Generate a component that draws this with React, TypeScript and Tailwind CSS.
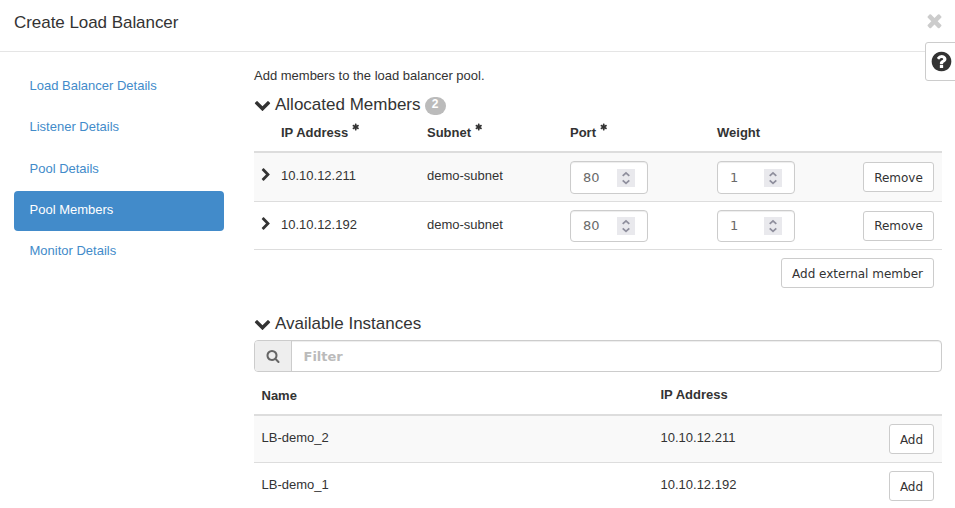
import React from "react";

const CHEVRON_DOWN =
  "M1683 808l-742 741q-19 19-45 19t-45-19l-742-741q-19-19-19-45.5t19-45.5l166-165q19-19 45-19t45 19l531 531 531-531q19-19 45-19t45 19l166 165q19 19 19 45.5t-19 45.5z";
const CHEVRON_RIGHT =
  "M1363 877l-742 742q-19 19-45 19t-45-19l-166-166q-19-19-19-45t19-45l531-531-531-531q-19-19-19-45t19-45l166-166q19-19 45-19t45 19l742 742q19 19 19 45t-19 45z";
const TIMES =
  "M1490 1322q0 40-28 68l-136 136q-28 28-68 28t-68-28l-294-294-294 294q-28 28-68 28t-68-28l-136-136q-28-28-28-68t28-68l294-294-294-294q-28-28-28-68t28-68l136-136q28-28 68-28t68 28l294 294 294-294q28-28 68-28t68 28l136 136q28 28 28 68t-28 68l-294 294 294 294q28 28 28 68z";
const QUESTION =
  "M1024 1376v-192q0-14-9-23t-23-9h-192q-14 0-23 9t-9 23v192q0 14 9 23t23 9h192q14 0 23-9t9-23zm256-672q0-88-55.5-163t-138.5-116-170-41q-243 0-371 213-15 24 8 42l132 100q7 6 19 6 16 0 25-12 53-68 86-92 34-24 86-24 48 0 85.5 26t37.5 59q0 38-20 61t-68 45q-63 28-115.5 86.5t-52.5 125.5v36q0 14 9 23t23 9h192q14 0 23-9t9-23q0-19 21.5-49.5t54.5-49.5q32-18 49-28.5t46-35 44.5-48 28-60.5 12.5-81zm384 192q0 209-103 385.5t-279.5 279.5-385.5 103-385.5-103-279.5-279.5-103-385.5 103-385.5 279.5-279.5 385.5-103 385.5 103 279.5 279.5 103 385.5z";
const SEARCH =
  "M1216 832q0-185-131.5-316.5t-316.5-131.5-316.5 131.5-131.5 316.5 131.5 316.5 316.5 131.5 316.5-131.5 131.5-316.5zm512 832q0 52-38 90t-90 38q-54 0-90-38l-343-342q-179 124-399 124-143 0-273.5-55.5t-225-150-150-225-55.5-273.5 55.5-273.5 150-225 225-150 273.5-55.5 273.5 55.5 225 150 150 225 55.5 273.5q0 220-124 399l343 343q37 37 37 90z";
const ASTERISK =
  "M1482 1050q46 26 59.5 77.5t-12.5 97.5l-64 110q-26 46-77.5 59.5t-97.5-12.5l-266-153v307q0 52-38 90t-90 38h-128q-52 0-90-38t-38-90v-307l-266 153q-46 26-97.5 12.5t-77.5-59.5l-64-110q-26-46-12.5-97.5t59.5-77.5l266-154-266-154q-46-26-59.5-77.5t12.5-97.5l64-110q26-46 77.5-59.5t97.5 12.5l266 153v-307q0-52 38-90t90-38h128q52 0 90 38t38 90v307l266-153q46-26 97.5-12.5t77.5 59.5l64 110q26 46 12.5 97.5t-59.5 77.5l-266 154z";

function Icon({ d, className }: { d: string; className: string }) {
  return (
    <svg viewBox="0 0 1792 1792" fill="currentColor" aria-hidden="true" className={`shrink-0 ${className}`}>
      <path d={d} />
    </svg>
  );
}

const steps = ["Load Balancer Details", "Listener Details", "Pool Details", "Pool Members", "Monitor Details"];

function Button({ children, className = "leading-[30px]" }: { children: React.ReactNode; className?: string }) {
  return (
    <button
      className={`h-[30px] shrink-0 rounded-[3px] border border-[#ccc] bg-white text-center font-['DejaVu_Sans',sans-serif] text-[12px] whitespace-nowrap text-[#333] ${className}`}
    >
      {children}
    </button>
  );
}

function NumberInput({ value, className }: { value: string; className: string }) {
  return (
    <div
      className={`flex w-[78px] items-center justify-between rounded-[4px] border border-[#ccc] bg-white pr-3 pl-3 shadow-[inset_0_1px_1px_rgba(0,0,0,0.075)] ${className}`}
    >
      <span className="font-['DejaVu_Sans',sans-serif] text-[13px] leading-[18px] text-[#6a6a6a]">{value}</span>
      <span className="flex h-[18px] w-[18px] items-center justify-center bg-[#e9e9ed]">
        <svg viewBox="0 0 18 18" className="h-[18px] w-[18px]" fill="none" stroke="#8f8f9d" strokeWidth="1.8">
          <path d="M5.7 6.9 9 3.9l3.3 3M5.7 11.4l3.3 3 3.3-3" />
        </svg>
      </span>
    </div>
  );
}

function Required() {
  return <Icon d={ASTERISK} className="-mt-px ml-[3.5px] h-2 w-2" />;
}

const memberCols = "grid grid-cols-[27px_146px_143px_147px_1fr_79px]";

function MemberRow({
  ip,
  className,
  inputClass,
  buttonClass,
}: {
  ip: string;
  className: string;
  inputClass: string;
  buttonClass: string;
}) {
  return (
    <div className={`${memberCols} border-b border-[#ddd] pt-2 ${className}`}>
      <Icon d={CHEVRON_RIGHT} className="mt-[7px] ml-[5px] h-[14px] w-[14px]" />
      <span className="mt-[6px]">{ip}</span>
      <span className="mt-[6px]">demo-subnet</span>
      <NumberInput value="80" className={inputClass} />
      <NumberInput value="1" className={inputClass} />
      <Button className={`mt-px w-[71px] ${buttonClass}`}>Remove</Button>
    </div>
  );
}

const instanceCols = "grid grid-cols-[399px_1fr_45px] pr-2 pl-[7.5px]";

function InstanceRow({ name, ip, className }: { name: string; ip: string; className: string }) {
  return (
    <div className={`${instanceCols} h-[47px] pt-2 ${className}`}>
      <span className="mt-[5px]">{name}</span>
      <span className="mt-[5px]">{ip}</span>
      <Button className="w-[45px] leading-[30px]">Add</Button>
    </div>
  );
}

export default function App() {
  return (
    <div className="relative h-[508px] w-[955px] overflow-hidden bg-white font-['Liberation_Sans',Arial,sans-serif] text-[13px] leading-[18px] text-[#333]">
      <header className="flex h-[52px] justify-between border-b border-[#e5e5e5] pr-[10px] pl-[14px]">
        <h1 className="mt-[11px] text-[17px] leading-6 tracking-[-0.05px]">Create Load Balancer</h1>
        <Icon d={TIMES} className="mt-[10px] h-[21px] w-[21px] text-[#ccc]" />
      </header>

      <div className="flex">
        <nav className="ml-[14px] flex w-[210px] shrink-0 flex-col gap-[1.35px] pt-[15px]">
          {steps.map((step) => (
            <a
              key={step}
              className={
                step === "Pool Members"
                  ? "block h-10 rounded-[4px] bg-[#428bca] px-[15.5px] pt-[10px] text-white"
                  : "block h-10 px-[15.5px] pt-[10px] text-[#428bca]"
              }
            >
              {step}
            </a>
          ))}
        </nav>

        <main className="ml-[30px] flex w-[688px] flex-col">
          <p className="mt-[15px]">Add members to the load balancer pool.</p>

          <h2 className="mt-[8px] flex h-6 text-[17px] leading-6">
            <Icon d={CHEVRON_DOWN} className="mt-[3px] -ml-[0.5px] mr-[4.5px] h-[17px] w-[17px]" />
            Allocated Members
            <span className="mt-[4px] ml-[4px] h-[18px] w-[21px] rounded-[10px] bg-[#bbb] text-center text-[12px] leading-[15px] font-bold text-white">
              2
            </span>
          </h2>

          <div className={`${memberCols} h-[36px] border-b-2 border-[#ddd] pt-[7px] font-bold`}>
            <span />
            <span className="flex">IP Address<Required /></span>
            <span className="flex">Subnet<Required /></span>
            <span className="flex">Port<Required /></span>
            <span>Weight</span>
          </div>
          <MemberRow
            ip="10.10.12.211"
            className="h-[49px] bg-[#f9f9f9]"
            inputClass="h-[33px]"
            buttonClass="leading-[30px]"
          />
          <MemberRow ip="10.10.12.192" className="h-[48px]" inputClass="h-8" buttonClass="leading-[28px]" />
          <div className="flex h-[51px] justify-end pt-2 pr-2">
            <Button className="w-[153px] leading-[30px]">Add external member</Button>
          </div>

          <h2 className="mt-[11px] flex h-[28px] text-[17px] leading-6">
            <Icon d={CHEVRON_DOWN} className="mt-[3px] -ml-[0.5px] mr-[4.5px] h-[17px] w-[17px]" />
            Available Instances
          </h2>
          <div className="flex h-8 shrink-0 overflow-hidden rounded-[4px] border border-[#ccc] shadow-[inset_0_1px_1px_rgba(0,0,0,0.075)]">
            <span className="flex w-[37px] items-center justify-center border-r border-[#ccc] bg-[#eee] pr-px pb-px text-[#666]">
              <Icon d={SEARCH} className="h-[14px] w-[14px]" />
            </span>
            <span className="pl-[11.5px] font-['DejaVu_Sans',sans-serif] text-[13px] leading-[31px] font-bold text-[#bbb]">
              Filter
            </span>
          </div>

          <div className={`${instanceCols} h-[44px] border-b-2 border-[#ddd] pt-[14px] font-bold`}>
            <span className="pt-px">Name</span>
            <span>IP Address</span>
          </div>
          <InstanceRow name="LB-demo_2" ip="10.10.12.211" className="border-b border-[#ddd] bg-[#f9f9f9]" />
          <InstanceRow name="LB-demo_1" ip="10.10.12.192" className="" />
        </main>
      </div>

      <button className="absolute top-[42px] right-[-1px] flex h-[39px] w-[31px] items-center rounded-l-[3px] border border-[#ccc] bg-white pl-[3.5px]">
        <Icon d={QUESTION} className="h-[23px] w-[23px]" />
      </button>
    </div>
  );
}
